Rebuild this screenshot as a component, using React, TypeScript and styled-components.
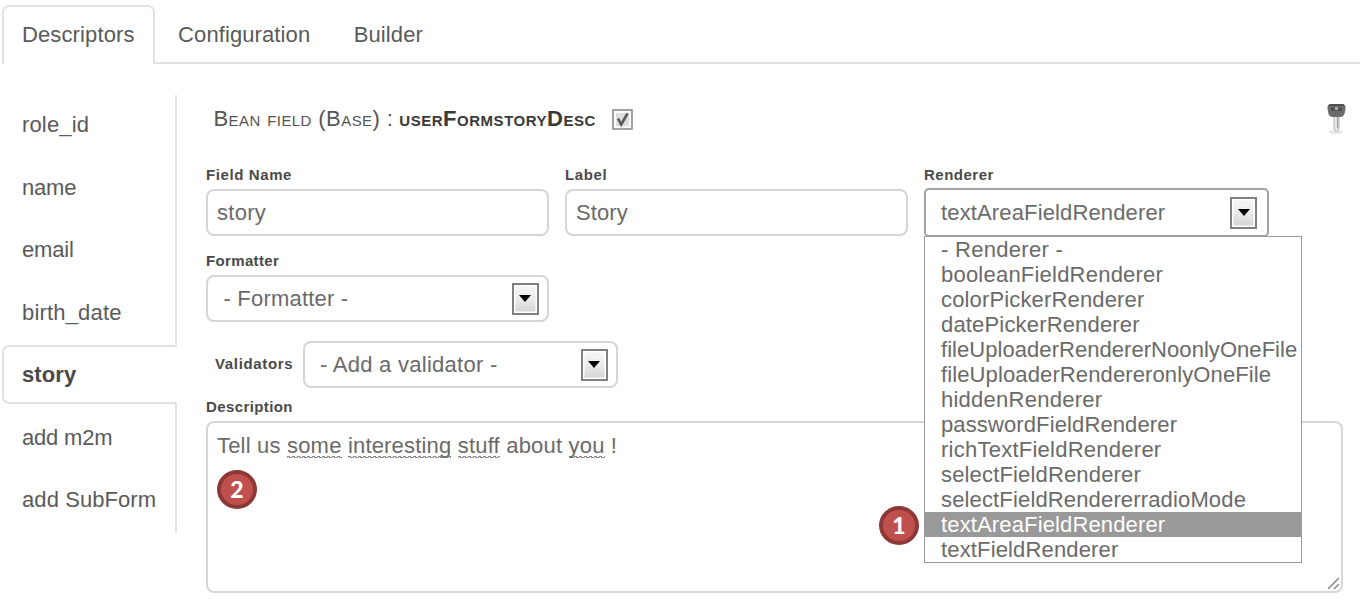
import React from "react";
import styled, { createGlobalStyle } from "styled-components";

const Global = createGlobalStyle`
  * { box-sizing: border-box; }
  body { margin: 0; background: #fff; overflow: hidden; font-family: "Liberation Sans", Arial, sans-serif; font-size: 22px; color: #5a5a5a; }
`;
const Page = styled.div`
  width: 1360px; height: 606px; padding-top: 5px; overflow: hidden;
`;
const Tabs = styled.nav`
  display: flex; height: 59px; margin-left: 2px; border-bottom: 2px solid #e2e2e2;
`;
const Tab = styled.div<{ $active?: boolean; $ls?: number }>`
  height: 59px; line-height: 56px; padding: 0 18px; margin-right: 3.5px; white-space: nowrap;
  border: 2px solid ${p => (p.$active ? "#e2e2e2" : "transparent")}; border-bottom: 0;
  border-radius: 7px 7px 0 0; background: ${p => (p.$active ? "#fff" : "transparent")};
  letter-spacing: ${p => p.$ls ?? 0}px;
`;
const Body = styled.div`
  display: flex; align-items: flex-start; padding: 31px 0 0 2px;
`;
const Side = styled.aside`
  width: 174.5px; flex: none; height: 437px; display: flex; flex-direction: column; gap: 4px;
  background: linear-gradient(#e2e2e2, #e2e2e2) right / 2px 100% no-repeat;
`;
const SideItem = styled.div<{ $active?: boolean; $ls?: number }>`
  height: 58.5px; line-height: 56px; padding-left: 18px; white-space: nowrap;
  border: 2px solid ${p => (p.$active ? "#e2e2e2" : "transparent")}; border-right: 0;
  border-radius: 7px 0 0 7px; background: ${p => (p.$active ? "#fff" : "transparent")};
  font-weight: ${p => (p.$active ? 700 : 400)}; color: ${p => (p.$active ? "#484848" : "inherit")};
  letter-spacing: ${p => p.$ls ?? 0}px;
`;
const Main = styled.main`
  width: 1137px; margin-left: 29.5px; padding-top: 8px;
`;
const Heading = styled.header`
  display: flex; align-items: center; height: 32px; padding-left: 7.5px; margin-bottom: 30px;
`;
const Title = styled.h1`
  margin: 0; font-size: 22px; font-weight: 400; font-variant: small-caps; color: #555;
  white-space: pre; width: 398.5px; letter-spacing: 0.42px;
  b { color: #3a3a3a; margin-left: -0.5px; letter-spacing: 0.52px; }
`;
const Check = styled.span`
  width: 21px; height: 21px; display: block;
  svg { display: block; }
`;
const Key = styled.span`
  margin-left: auto; margin-right: -5px; height: 34px;
`;
const Row = styled.div`
  display: flex; gap: 16px; margin-bottom: 15px;
`;
const Field = styled.div`
  width: 343px; position: relative;
`;
const Label = styled.label<{ $ls?: number }>`
  display: block; font-size: 15px; font-weight: 700; line-height: 20px; height: 24px;
  letter-spacing: ${p => p.$ls ?? 0.4}px; color: #4a4a4a; white-space: nowrap;
`;
const Box = styled.div<{ $focus?: boolean; $select?: boolean; $w?: number }>`
  display: flex; align-items: center; justify-content: space-between;
  height: 47px; width: ${p => (p.$w ? `${p.$w}px` : "100%")};
  padding: 0 8.5px 0 ${p => (p.$select ? 15.5 : 9)}px;
  border: 2px solid ${p => (p.$focus ? "#a0a0a0" : "#d6d6d6")};
  border-radius: ${p => (p.$focus ? 5 : 8)}px; white-space: nowrap; color: #6a6a6a;
`;
const FocusField = styled(Field)`
  width: 344.5px;
  ${Box} { height: 49px; margin: -1px 0; padding-left: 15px; padding-right: 9.5px; }
`;
const Text = styled.span<{ $ls?: number }>`
  letter-spacing: ${p => p.$ls ?? 0}px;
`;
const DropButton = styled.span`
  width: 27px; height: 32px; border: 2px solid #808080; display: flex; align-items: center; justify-content: center;
  background: linear-gradient(#f6f6f6, #ebebeb 50%, #d2d2d2); box-shadow: inset 0 0 0 1.5px #fff;
`;
const Menu = styled.ul`
  position: absolute; left: 0; top: 71px; width: 378px; margin: 0; padding: 0; z-index: 2;
  list-style: none; background: #fff; border: 1.5px solid #999; color: #6a6a6a;
`;
const Option = styled.li<{ $on?: boolean; $ls?: number }>`
  height: 25px; line-height: 25px; padding-left: 16px; white-space: nowrap;
  background: ${p => (p.$on ? "#999" : "transparent")}; color: ${p => (p.$on ? "#fff" : "inherit")};
  letter-spacing: ${p => p.$ls ?? 0}px;
`;
const Validators = styled.div`
  display: flex; align-items: center; padding-left: 9px; height: 47px; margin: 19px 0 9px;
  ${Label} { width: 88px; height: 22px; }
  ${Box} { padding-left: 15px; }
`;
const Area = styled.div`
  position: relative; height: 172px; padding: 10px 9px; border: 2px solid #d6d6d6; border-radius: 8px;
  line-height: 26px; color: #6a6a6a; white-space: pre; letter-spacing: 0.19px;
`;
const Grip = styled.svg`
  position: absolute; right: 0; bottom: 0;
`;
const Misspelt = styled.span`
  background:
    repeating-linear-gradient(90deg, #8a8a8a 0 3px, transparent 3px 5px) left bottom 1px / 100% 1px no-repeat,
    repeating-linear-gradient(90deg, #bbb 0 1px, transparent 1px 2px, #8a8a8a 2px 5px) left bottom / 100% 1px no-repeat;
`;
const Badge = styled.span<{ $x: number; $y: number }>`
  position: absolute; left: ${p => p.$x}px; top: ${p => p.$y}px; width: 40px; height: 39px; border-radius: 50%;
  border: 4px solid #8c3836; background: #c0504d; color: #fff; z-index: 3;
  font: 900 23px/31px Lato, sans-serif; text-align: center;
`;

const Arrow = () => (
  <DropButton><svg width="12" height="7" viewBox="0 0 12 7"><path d="M0 0H12L6 7Z" fill="#000" /></svg></DropButton>
);

const tabs: [string, number][] = [["Descriptors", 0.12], ["Configuration", 0.1], ["Builder", 0.1]];
const items: [string, number][] = [
  ["role_id", 0.15], ["name", -0.2], ["email", -0.15], ["birth_date", 0.18], ["story", 0.1], ["add m2m", -0.2], ["add SubForm", 0.08],
];
const options: [string, number][] = [
  ["- Renderer -", 0.3], ["booleanFieldRenderer", 0.22], ["colorPickerRenderer", 0.15], ["datePickerRenderer", 0.17],
  ["fileUploaderRendererNoonlyOneFile", 0.05], ["fileUploaderRendereronlyOneFile", 0.12], ["hiddenRenderer", 0.25],
  ["passwordFieldRenderer", 0.12], ["richTextFieldRenderer", 0.25], ["selectFieldRenderer", 0.16],
  ["selectFieldRendererradioMode", 0.15], ["textAreaFieldRenderer", 0.14], ["textFieldRenderer", 0.15],
];

export default function App() {
  return (
    <Page>
      <Global />
      <Tabs>{tabs.map(([t, ls], i) => <Tab key={t} $active={i === 0} $ls={ls}>{t}</Tab>)}</Tabs>
      <Body>
        <Side>{items.map(([t, ls]) => <SideItem key={t} $active={t === "story"} $ls={ls}>{t}</SideItem>)}</Side>
        <Main>
          <Heading>
            <Title>Bean field (Base) : <b>userFormstoryDesc</b></Title>
            <Check>
              <svg width="21" height="21" viewBox="0 0 21 21">
                <rect x="1" y="1" width="19" height="19" fill="#fafafa" stroke="#8c8c8c" strokeWidth="1.6" />
                <rect x="4" y="4" width="13" height="13" fill="#dedede" />
                <path d="M6 9.5L9.2 15.5L15.5 4.5" fill="none" stroke="#5a5a5a" strokeWidth="2.6" />
              </svg>
            </Check>
            <Key>
              <svg width="22" height="34" viewBox="0 0 22 34">
                <ellipse cx="10" cy="30" rx="7" ry="2" fill="#e6e6e6" />
                <path d="M8 14H13V27L10.5 30L8 27Z" fill="#e8e8e8" stroke="#b5b5b5" />
                <path d="M11.5 15V26" stroke="#999" />
                <path d="M4 2H17Q20 3 19.5 7L18.5 12Q17 15 14 15H7Q3.500 15 2.500 12L1.500 7Q1 3 4 2Z" fill="#6c6c6c" />
                <path d="M4 2H17L19 4H2Z" fill="#505050" />
                <rect x="5" y="5.500" width="11" height="3.500" fill="#505050" />
                <rect x="9" y="5" width="3" height="3" fill="#aaa" />
              </svg>
            </Key>
          </Heading>
          <Row>
            <Field><Label $ls={0.6}>Field Name</Label><Box><Text $ls={0.3}>story</Text></Box></Field>
            <Field><Label $ls={0.6}>Label</Label><Box><Text $ls={0.1}>Story</Text></Box></Field>
            <FocusField>
              <Label $ls={0.5}>Renderer</Label>
              <Box $focus $select><Text $ls={0.14}>textAreaFieldRenderer</Text><Arrow /></Box>
              <Menu>{options.map(([t, ls]) => <Option key={t} $on={t === "textAreaFieldRenderer"} $ls={ls}>{t}</Option>)}</Menu>
            </FocusField>
          </Row>
          <Field><Label $ls={0.35}>Formatter</Label><Box $select><Text $ls={0.2}>- Formatter -</Text><Arrow /></Box></Field>
          <Validators><Label $ls={0.65}>Validators</Label><Box $select $w={315}><Text $ls={0.27}>- Add a validator -</Text><Arrow /></Box></Validators>
          <Label>Description</Label>
          <Area>
            Tell us <Misspelt>some</Misspelt> <Misspelt>interesting</Misspelt> <Misspelt>stuff</Misspelt> about <Misspelt>you</Misspelt> !
            <Grip width="16" height="16" viewBox="0 0 16 16"><path d="M3 14L14 3M9 14L14 9" stroke="#888" strokeWidth="1.5" /></Grip>
          </Area>
        </Main>
      </Body>
      <Badge $x={217} $y={470}>2</Badge>
      <Badge $x={879} $y={506}>1</Badge>
    </Page>
  );
}
